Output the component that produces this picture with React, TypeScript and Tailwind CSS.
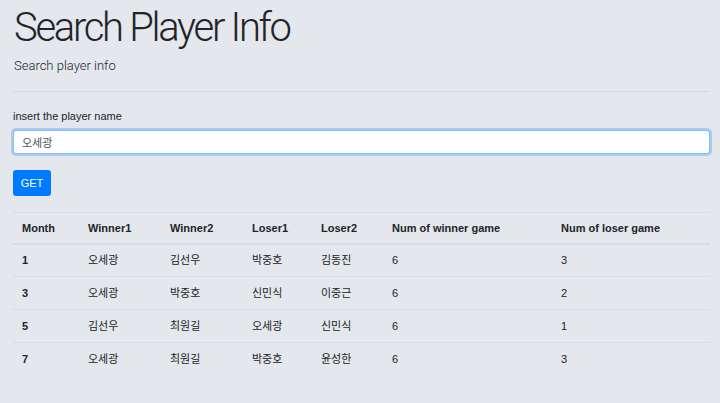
import React from "react";

const rows = [
  ["1", "오세광", "김선우", "박중호", "김동진", "6", "3"],
  ["3", "오세광", "박중호", "신민식", "이중근", "6", "2"],
  ["5", "김선우", "최원길", "오세광", "신민식", "6", "1"],
  ["7", "오세광", "최원길", "박중호", "윤성한", "6", "3"],
];

const headers = ["Month", "Winner1", "Winner2", "Loser1", "Loser2", "Num of winner game", "Num of loser game"];
const widths = ["w-[66px]", "w-[82px]", "w-[82px]", "w-[69px]", "w-[71px]", "w-[169px]", "w-[158px]"];

export default function App() {
  return (
    <div
      className="min-h-[403px] w-full bg-[#e4e7eb] text-[#212529] px-[13px] pt-[4px] pb-4"
      style={{ fontFamily: '"Liberation Sans", "Noto Sans CJK KR", Arial, sans-serif' }}
    >
      <div className="w-[697px] flex flex-col">
        <h1
          className="text-[40px] leading-[48px] font-light tracking-[-2.3px] pl-[1px]"
          style={{ fontFamily: 'Roboto, "Liberation Sans", sans-serif' }}
        >
          Search Player Info
        </h1>
        <p
          className="mt-[4px] text-[13px] leading-[20px] font-light pl-[1px]"
          style={{ fontFamily: 'Roboto, "Liberation Sans", sans-serif' }}
        >
          Search player info
        </p>
        <hr className="mt-[15px] border-0 border-t border-[#d5d9dd]" />
        <label className="mt-[16px] text-[11px] leading-[16px] text-[#212529]">insert the player name</label>
        <input
          readOnly
          value="오세광"
          className="mt-[6px] h-[24px] w-full bg-white border border-[#80bdff] rounded-[3px] px-[8px] text-[11px] text-[#495057] outline-none shadow-[0_0_0_2px_rgba(0,123,255,0.25)]"
        />
        <div className="mt-[16px]">
          <button className="h-[26px] w-[38px] rounded-[3px] bg-[#007bff] text-white text-[11px] leading-[26px]">GET</button>
        </div>
        <table className="mt-[16px] w-[697px] table-fixed border-collapse text-[11px]">
          <colgroup>
            {widths.map((w, i) => (
              <col key={i} className={w} />
            ))}
          </colgroup>
          <thead>
            <tr className="border-t border-[#d9dde1] border-b-2 border-b-[#d9dde1]">
              {headers.map((h) => (
                <th key={h} className="text-left font-bold px-[9px] h-[31px] leading-[16px] align-middle">
                  {h}
                </th>
              ))}
            </tr>
          </thead>
          <tbody>
            {rows.map((r, ri) => (
              <tr key={ri} className={ri > 0 ? "border-t border-[#d9dde1]" : ""}>
                {r.map((c, ci) => (
                  <td
                    key={ci}
                    className={`px-[9px] h-[33px] leading-[16px] align-middle ${ci === 0 ? "font-bold" : ""}`}
                  >
                    {c}
                  </td>
                ))}
              </tr>
            ))}
          </tbody>
        </table>
      </div>
    </div>
  );
}
